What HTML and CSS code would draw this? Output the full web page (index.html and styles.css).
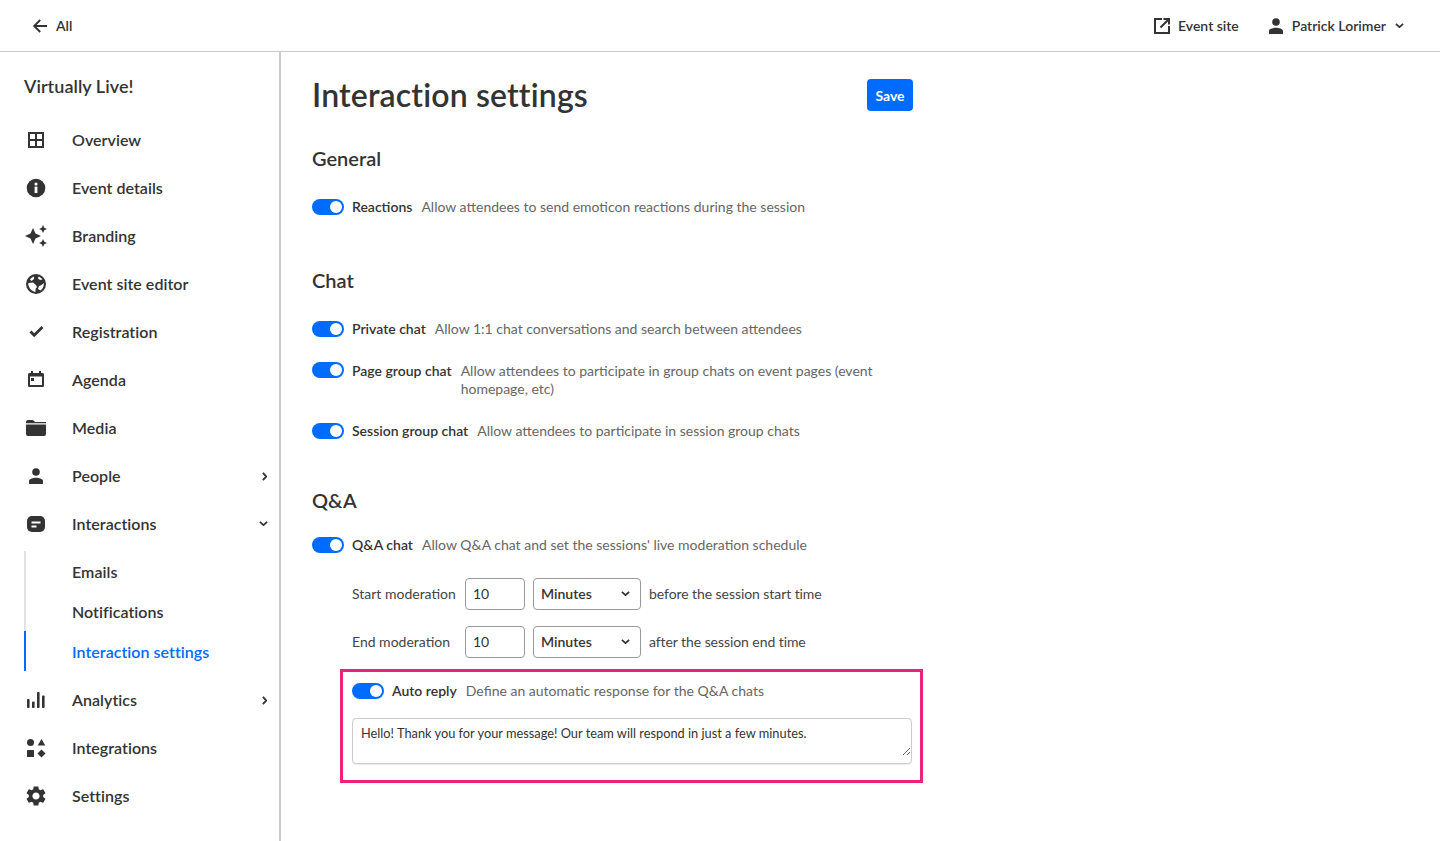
FILE: index.html
```html
<!DOCTYPE html>
<html lang="en">
<head>
<meta charset="utf-8">
<title>Interaction settings</title>
<link rel="stylesheet" href="styles.css">
</head>
<body>
<header class="topbar">
  <a class="back">
    <svg class="ic-back" viewBox="0 0 16 16"><path d="M15 8H2.500M8.200 2 2.200 8l6 6" fill="none" stroke="#333" stroke-width="1.900"/></svg>
    <span>All</span>
  </a>
  <div class="top-right">
    <a class="site-link">
      <svg class="ic-16" viewBox="0 0 16 16"><path d="M8 1H1v14h14V8" fill="none" stroke="#333" stroke-width="2"/><path d="M9.500 1H15v5.500M15 1 6.500 9.500" fill="none" stroke="#333" stroke-width="2"/></svg>
      <span>Event site</span>
    </a>
    <a class="user">
      <svg class="ic-16" viewBox="4 4 16 16"><circle cx="12" cy="8" r="3.800" fill="#333"/><path d="M12 13.700c-2.500 0-7 1-7 3.300V20h14v-3c0-2.300-4.500-3.300-7-3.300z" fill="#333"/></svg>
      <span>Patrick Lorimer</span>
      <svg class="ic-chev-d" viewBox="0 0 10 6"><path d="M1 1l4 3.600L9 1" fill="none" stroke="#333" stroke-width="2"/></svg>
    </a>
  </div>
</header>
<div class="layout">
  <aside class="sidebar">
    <div class="event-name">Virtually Live!</div>
    <nav class="nav">
      <a class="nav-item"><svg class="ic" viewBox="0 0 24 24"><path d="M5 5h14v14H5zM12 5v14M5 12h14" fill="none" stroke="#333" stroke-width="2"/></svg><span>Overview</span></a>
      <a class="nav-item"><svg class="ic" viewBox="0 0 24 24"><circle cx="12" cy="12" r="9.300" fill="#333"/><rect x="10.600" y="10.600" width="2.800" height="6.400" fill="#fff"/><circle cx="12" cy="8" r="1.600" fill="#fff"/></svg><span>Event details</span></a>
      <a class="nav-item"><svg class="ic" viewBox="0 0 24 24"><path fill="#333" d="M19 9l1.250-2.750L23 5l-2.750-1.250L19 1l-1.250 2.750L15 5l2.750 1.250L19 9zm-7.500.5L9 4 6.500 9.500 1 12l5.500 2.500L9 20l2.500-5.500L17 12l-5.500-2.500zM19 15l-1.250 2.750L15 19l2.750 1.250L19 23l1.250-2.750L23 19l-2.750-1.250L19 15z"/></svg><span>Branding</span></a>
      <a class="nav-item"><svg class="ic" viewBox="0 0 24 24"><circle cx="12" cy="12" r="10" fill="#333"/><g fill="#fff"><path d="M4.500 11L9 10.500L12 13L13 15L11.500 17L11.500 20C8 19.500 4.500 16 4.200 12z"/><path d="M6 7.500C7 6 8.500 5 10 4.500L10 7L7.500 9z"/><path d="M19.800 11C20 14 19 17 16.500 18.500L14 17L15 14L17.500 13z"/><path d="M14.500 4.500C16 5 17.500 6.200 18.500 7.500L16 8L14 6.500z"/></g></svg><span>Event site editor</span></a>
      <a class="nav-item"><svg class="ic" viewBox="0 0 24 24"><path d="M6.500 11.500l3.700 3.700L18.500 7" fill="none" stroke="#333" stroke-width="2.800"/></svg><span>Registration</span></a>
      <a class="nav-item"><svg class="ic" viewBox="0 0 24 24"><path fill="#333" fill-rule="evenodd" d="M7 3h2v2h6V3h2v2h1.500A1.500 1.500 0 0 1 20 6.500v11a1.500 1.500 0 0 1-1.500 1.500h-13A1.500 1.500 0 0 1 4 17.500v-11A1.500 1.500 0 0 1 5.500 5H7zM6 8.500V17h12V8.500z"/><rect x="7" y="10" width="3" height="3" fill="#333"/></svg><span>Agenda</span></a>
      <a class="nav-item"><svg class="ic" viewBox="0 0 24 24"><path fill="#333" d="M2 6a2 2 0 0 1 2-2h5l2 2h11v1.200H2zM2 8.500h20V18a2 2 0 0 1-2 2H4a2 2 0 0 1-2-2z"/></svg><span>Media</span></a>
      <a class="nav-item"><svg class="ic" viewBox="0 0 24 24"><circle cx="12" cy="8" r="3.800" fill="#333"/><path d="M12 13.700c-2.500 0-7 1-7 3.300V20h14v-3c0-2.300-4.500-3.300-7-3.300z" fill="#333"/></svg><span>People</span><svg class="chev-r" viewBox="0 0 6 10"><path d="M1 1l3.600 4L1 9" fill="none" stroke="#333" stroke-width="2"/></svg></a>
      <a class="nav-item"><svg class="ic" viewBox="0 0 24 24"><rect x="3" y="4" width="18" height="16" rx="5" fill="#333"/><path d="M7.500 10.500h9M7.500 14.500h5" stroke="#fff" stroke-width="2.200"/></svg><span>Interactions</span><svg class="chev-d" viewBox="0 0 10 6"><path d="M1 1l4 3.600L9 1" fill="none" stroke="#333" stroke-width="2"/></svg></a>
      <div class="subnav">
        <a class="sub-item">Emails</a>
        <a class="sub-item">Notifications</a>
        <a class="sub-item active">Interaction settings</a>
      </div>
      <a class="nav-item"><svg class="ic" viewBox="0 0 24 24"><g fill="#333"><rect x="3" y="11" width="2.600" height="9" rx=".8"/><rect x="8" y="13.500" width="2.600" height="6.500" rx=".8"/><rect x="13" y="4" width="2.600" height="16" rx=".8"/><rect x="18" y="7.500" width="2.600" height="12.500" rx=".8"/></g></svg><span>Analytics</span><svg class="chev-r" viewBox="0 0 6 10"><path d="M1 1l3.600 4L1 9" fill="none" stroke="#333" stroke-width="2"/></svg></a>
      <a class="nav-item"><svg class="ic" viewBox="0 0 24 24"><g fill="#333"><circle cx="6.500" cy="6.500" r="3.500"/><path d="M17.500 3l3.800 6.500h-7.600z"/><rect x="3" y="14" width="7" height="7" rx=".5"/><path d="M17.500 13.500l4 4-4 4-4-4z"/></g></svg><span>Integrations</span></a>
      <a class="nav-item"><svg class="ic" viewBox="0 0 24 24"><path fill="#333" d="M19.140 12.940c.04-.3.06-.61.06-.94 0-.32-.02-.64-.07-.94l2.030-1.580c.18-.14.23-.41.12-.61l-1.920-3.320c-.12-.22-.37-.29-.59-.22l-2.390.96c-.5-.38-1.030-.7-1.620-.94l-.36-2.540c-.04-.24-.24-.41-.48-.41h-3.840c-.24 0-.43.17-.47.41l-.36 2.540c-.59.24-1.130.57-1.620.94l-2.390-.96c-.22-.08-.47 0-.59.22L2.740 8.870c-.12.21-.08.47.12.61l2.030 1.580c-.05.3-.09.63-.09.94s.02.64.07.94l-2.030 1.580c-.18.14-.23.41-.12.61l1.920 3.320c.12.22.37.29.59.22l2.390-.96c.5.38 1.030.7 1.620.94l.36 2.540c.05.24.24.41.48.41h3.840c.24 0 .44-.17.47-.41l.36-2.540c.59-.24 1.130-.56 1.620-.94l2.390.96c.22.08.47 0 .59-.22l1.920-3.320c.12-.22.07-.47-.12-.61l-2.010-1.580zM12 15.600c-1.980 0-3.600-1.620-3.600-3.600s1.620-3.600 3.600-3.600 3.600 1.620 3.600 3.600-1.620 3.600-3.600 3.600z"/></svg><span>Settings</span></a>
    </nav>
  </aside>
  <main class="main">
    <div class="title-row">
      <h1>Interaction settings</h1>
      <button class="save">Save</button>
    </div>
    <section class="section general">
      <h2>General</h2>
      <div class="setting"><span class="toggle"></span><p><b>Reactions</b><span>Allow attendees to send emoticon reactions during the session</span></p></div>
    </section>
    <section class="section chat">
      <h2>Chat</h2>
      <div class="setting"><span class="toggle"></span><p><b>Private chat</b><span>Allow 1:1 chat conversations and search between attendees</span></p></div>
      <div class="setting two-line"><span class="toggle"></span><p><b>Page group chat</b><span>Allow attendees to participate in group chats on event pages (event homepage, etc)</span></p></div>
      <div class="setting"><span class="toggle"></span><p><b>Session group chat</b><span>Allow attendees to participate in session group chats</span></p></div>
    </section>
    <section class="section qa">
      <h2>Q&amp;A</h2>
      <div class="setting"><span class="toggle"></span><p><b>Q&amp;A chat</b><span>Allow Q&amp;A chat and set the sessions' live moderation schedule</span></p></div>
      <div class="mod-rows">
        <div class="mod-row">
          <label>Start moderation</label>
          <input class="num" value="10">
          <div class="select-wrap"><select><option>Minutes</option></select><svg class="select-chev" viewBox="0 0 10 6"><path d="M1 1l4 3.600L9 1" fill="none" stroke="#333" stroke-width="2"/></svg></div>
          <span class="mod-note">before the session start time</span>
        </div>
        <div class="mod-row">
          <label>End moderation</label>
          <input class="num" value="10">
          <div class="select-wrap"><select><option>Minutes</option></select><svg class="select-chev" viewBox="0 0 10 6"><path d="M1 1l4 3.600L9 1" fill="none" stroke="#333" stroke-width="2"/></svg></div>
          <span class="mod-note">after the session end time</span>
        </div>
      </div>
      <div class="highlight">
        <div class="setting"><span class="toggle"></span><p><b>Auto reply</b><span>Define an automatic response for the Q&amp;A chats</span></p></div>
        <div class="reply-box"><textarea class="reply">Hello! Thank you for your message! Our team will respond in just a few minutes.</textarea></div>
      </div>
    </section>
  </main>
</div>
</body>
</html>
```
FILE: styles.css
```css
* { box-sizing: border-box; }
html, body { margin: 0; height: 841px; overflow: hidden; }
body { font-family: Lato, "Open Sans", sans-serif; color: #333; background: #fff; font-size: 14px; }
svg { display: block; flex: none; }
.topbar { height: 52px; border-bottom: 1px solid #ccc; display: flex; align-items: center; justify-content: space-between; padding: 0 36px 0 32px; font-weight: 600; }
.back, .site-link, .user { display: flex; align-items: center; }
.back { gap: 8px; }
.ic-back { width: 16px; height: 16px; }
.ic-16 { width: 16px; height: 16px; }
.top-right { display: flex; align-items: center; gap: 29px; }
.site-link, .user { gap: 8px; }
.ic-chev-d { width: 9px; height: 5.400px; margin-left: 1px; }
.layout { display: flex; height: 789px; }
.sidebar { width: 281px; border-right: 2px solid #ccc; padding: 24px 0 0 24px; flex: none; }
.event-name { font-size: 18px; font-weight: 600; line-height: 20px; margin-bottom: 20px; letter-spacing: .05px; }
.nav-item { height: 48px; display: flex; align-items: center; font-size: 16px; font-weight: 600; padding-right: 11px; letter-spacing: .04px; }
.nav-item span { flex: 1; padding-bottom: 2px; }
.ic { width: 24px; height: 24px; margin-right: 24px; }
.chev-r { width: 5.400px; height: 9px; margin: 0 1px 0 0; }
.chev-d { width: 9px; height: 5.400px; }
.subnav { margin: 3px 0 5px; border-left: 2px solid #e0e0e0; }
.sub-item { display: flex; align-items: center; height: 40px; padding: 1px 0 0 46px; margin-left: -2px; font-size: 16px; font-weight: 600; letter-spacing: .04px; border-left: 2px solid transparent; }
.sub-item.active { color: #006cff; border-left-color: #006cff; }
.main { padding: 27px 0 0 31px; width: 632px; flex: none; }
.title-row { display: flex; justify-content: space-between; align-items: center; height: 32px; width: 601px; }
h1 { margin: 0; font-size: 32px; font-weight: 600; line-height: 32px; letter-spacing: .15px; }
.save { width: 46px; height: 32px; border: 0; border-radius: 4px; background: #006cff; color: #fff; font: 700 14px Lato, sans-serif; padding: 0; }
h2 { margin: 0 0 29px; font-size: 20px; font-weight: 600; line-height: 22px; }
.general { margin-top: 36px; }
.chat { margin-top: 53px; }
.qa { margin-top: 49px; }
.qa h2 { margin-bottom: 25px; }
.setting { display: flex; align-items: flex-start; gap: 8px; margin-top: 24px; }
h2 + .setting { margin-top: 0; }
.toggle { width: 32px; height: 16px; border-radius: 8px; background: #006cff; flex: none; margin-top: 1px; position: relative; }
.two-line .toggle { margin-top: 0; }
.toggle::after { content: ""; position: absolute; right: 2px; top: 2px; width: 12px; height: 12px; border-radius: 50%; background: #fff; }
.setting p { margin: 0; display: flex; gap: 9px; line-height: 18px; font-size: 14px; }
.setting b { font-weight: 600; white-space: nowrap; }
.setting p span { color: #666; }
.mod-rows { margin: 24px 0 0 40px; display: flex; flex-direction: column; gap: 16px; color: #444; }
.mod-row { display: flex; align-items: center; gap: 8px; height: 32px; }
.mod-row label { width: 105px; padding-bottom: 2px; }
.mod-note { padding-bottom: 2px; letter-spacing: -.07px; }
.num { width: 60px; height: 32px; border: 1px solid #999; border-radius: 4px; padding: 0 7px 2px; font: 14px Lato, sans-serif; color: #333; }
.select-wrap { position: relative; width: 108px; height: 32px; }
select { appearance: none; width: 108px; height: 32px; border: 1px solid #999; border-radius: 4px; background: #fff; padding: 0 7px 1px; font: 600 14px Lato, sans-serif; color: #333; }
.select-chev { position: absolute; right: 11px; top: 13px; width: 9px; height: 5.400px; }
.highlight { margin: 11px 0 0 28px; width: 583px; height: 114px; border: 3px solid #e8247f; padding: 10px 0 0 9px; }
.highlight .setting { margin: 0; }
.reply-box { margin-top: 18px; width: 560px; height: 46px; border: 1px solid #ccc; border-radius: 4px; box-shadow: 0 1px 1px rgba(0,0,0,.08); }
.reply { display: block; width: 100%; height: 37px; border: 0; outline: 0; background: transparent; padding: 6px 8px; font: 12.800px/16px Lato, sans-serif; color: #333; }
```
